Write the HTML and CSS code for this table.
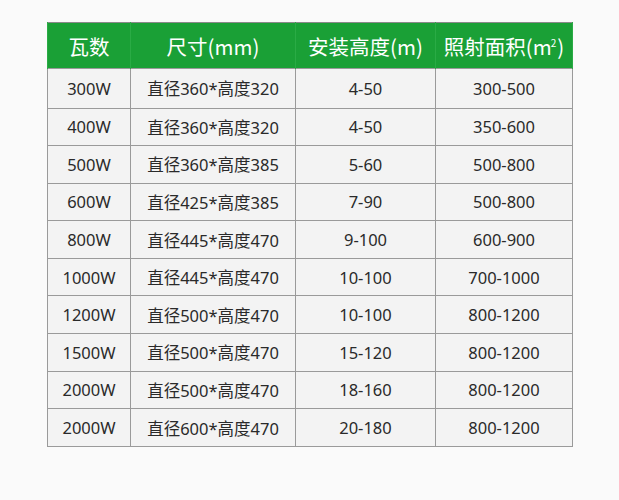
FILE: index.html
```html
<!DOCTYPE html>
<html lang="zh">
<head>
<meta charset="utf-8">
<link rel="stylesheet" href="styles.css">
</head>
<body>
<table class="spec">
  <colgroup>
    <col class="c1"><col class="c2"><col class="c3"><col class="c4">
  </colgroup>
  <thead>
    <tr><th>瓦数</th><th>尺寸(mm)</th><th>安装高度(m)</th><th>照射面积(m<sup class="sq">2</sup>)</th></tr>
  </thead>
  <tbody>
    <tr class="first"><td>300W</td><td>直径360*高度320</td><td>4-50</td><td>300-500</td></tr>
    <tr><td>400W</td><td>直径360*高度320</td><td>4-50</td><td>350-600</td></tr>
    <tr><td>500W</td><td>直径360*高度385</td><td>5-60</td><td>500-800</td></tr>
    <tr><td>600W</td><td>直径425*高度385</td><td>7-90</td><td>500-800</td></tr>
    <tr><td>800W</td><td>直径445*高度470</td><td>9-100</td><td>600-900</td></tr>
    <tr><td>1000W</td><td>直径445*高度470</td><td>10-100</td><td>700-1000</td></tr>
    <tr><td>1200W</td><td>直径500*高度470</td><td>10-100</td><td>800-1200</td></tr>
    <tr><td>1500W</td><td>直径500*高度470</td><td>15-120</td><td>800-1200</td></tr>
    <tr><td>2000W</td><td>直径500*高度470</td><td>18-160</td><td>800-1200</td></tr>
    <tr><td>2000W</td><td>直径600*高度470</td><td>20-180</td><td>800-1200</td></tr>
  </tbody>
</table>
</body>
</html>
```
FILE: styles.css
```css
html, body {
  margin: 0;
  background: #fafafa;
}
body {
  padding: 22px 0 0 47px;
  font-family: "Noto Sans", "Open Sans", "Noto Sans CJK SC", sans-serif;
}
.spec {
  border-collapse: collapse;
  table-layout: fixed;
  width: 525px;
  border: 1px solid #8a8a8a;
}
.c1 { width: 83px; }
.c2 { width: 165px; }
.c3 { width: 140px; }
.c4 { width: 137px; }
.spec th {
  background: #1aa036;
  color: #fff;
  font-family: "Noto Sans CJK SC", sans-serif;
  font-weight: normal;
  font-size: 20.5px;
  height: 45px;
  padding: 0;
  text-align: center;
  white-space: nowrap;
  border-left: 1px solid #2aab45;
  border-right: 1px solid #2aab45;
}
.spec th .sq {
  font-size: 10px;
  line-height: 0;
  vertical-align: 8px;
  margin-left: -1px;
  margin-right: 1px;
}
.spec td {
  background: #f3f3f3;
  color: #2a2a2a;
  font-size: 16.5px;
  height: 36.6px;
  padding: 0;
  text-align: center;
  border: 1px solid #9a9a9a;
}
.spec tr.first td {
  height: 38.5px;
}
```
